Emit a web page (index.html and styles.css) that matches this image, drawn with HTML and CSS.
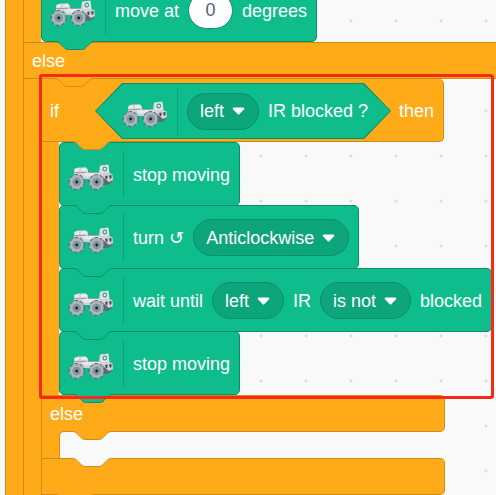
FILE: index.html
```html
<!DOCTYPE html>
<html lang="en">
<head>
<meta charset="utf-8">
<title>Block workspace</title>
<link rel="stylesheet" href="styles.css">
</head>
<body>
<svg class="defs" aria-hidden="true">
  <symbol id="tab" viewBox="0 0 40 9">
    <path class="tab-fill" d="M0 0V.5C3 .5 4 1.500 5 2.500L9 6.500C10.500 8 11.500 8.500 13.500 8.500H26.500C28.500 8.500 29.500 8 31 6.500L35 2.500C36 1.500 37 .5 40 .5V0Z"/>
    <path class="tab-line" d="M0 .5C3 .5 4 1.500 5 2.500L9 6.500C10.500 8 11.500 8.500 13.500 8.500H26.500C28.500 8.500 29.500 8 31 6.500L35 2.500C36 1.500 37 .5 40 .5"/>
  </symbol>
  <symbol id="caret" viewBox="0 0 13 8">
    <path d="M1.500 .5H11.500Q13 1 12 2.300L7.500 7Q6.500 8 5.500 7L1 2.300Q0 1 1.500 .5Z" fill="#fff"/>
  </symbol>
  <symbol id="rover" viewBox="0 0 46 27">
    <ellipse cx="38" cy="15" rx="6.500" ry="6" fill="#5d6b70"/>
    <path d="M6 8V5L10 3.500H18L20 5.500V8H31L32 1.500L40.500 .5L41.500 9L44.500 10.500L45 16L41 18L35 13L30 15H16L10 11H6Z" fill="#d0d3d5"/>
    <path d="M7 5L11 4V7L7 8ZM13 4.500L17 3.500L19 5.500V7H13Z" fill="#ebebec"/>
    <path d="M6 8.500H18M20 8.500H31" stroke="#87979a" stroke-width=".8"/>
    <path d="M14 9H31L33 12.500H17Z" fill="#e8e7e9"/>
    <path d="M32.500 2L40 1L41 8.500L33 9Z" fill="#e4e5e7"/>
    <rect x="34.500" y="2.500" width="4.500" height="5" rx="2" fill="#4b92a0"/>
    <circle cx="36.800" cy="5" r="1.200" fill="#cfeef0"/>
    <path d="M37 12L39.500 11.500V14.500L38 15.500ZM41 11.500L43.500 11V14L42 15Z" fill="#4a4a4c"/>
    <g id="wheel">
      <circle cx="8.700" cy="18" r="7.800" fill="#a7b3ba"/>
      <circle cx="8.700" cy="18" r="7.500" fill="none" stroke="#4b5a5f" stroke-width="1" stroke-dasharray="3.500 2"/>
      <circle cx="8.700" cy="18" r="5" fill="#8c9ca6" stroke="#b4c0c7" stroke-width="1"/>
      <path d="M8.700 14V22M4.700 18H12.700M6 15.300L11.400 20.700M11.400 15.300L6 20.700" stroke="#71828d" stroke-width=".6"/>
      <circle cx="8.700" cy="18" r="1.400" fill="#1c2427"/>
    </g>
    <use href="#wheel" x="20"/>
  </symbol>
</svg>

<main class="workspace">
  <div class="arm">
    <section class="c-block c-wide">
      <div class="mouth">
        <div class="block first">
          <svg class="rover"><use href="#rover"/></svg><span class="rule"></span>
          <label for="deg">move at</label>
          <input class="number" id="deg" type="text" value="0">
          <span>degrees</span>
          <svg class="tab"><use href="#tab"/></svg>
        </div>
      </div>
      <div class="bar">else<svg class="tab"><use href="#tab"/></svg></div>
      <div class="mouth">
        <section class="c-block">
          <div class="marked">
            <div class="bar head">
              <span>if</span>
              <div class="hexagon">
                <svg class="rover"><use href="#rover"/></svg><span class="rule"></span>
                <div class="dropdown"><select id="side1" aria-label="side"><option>left</option></select><svg class="caret"><use href="#caret"/></svg></div>
                <label for="side1">IR blocked ?</label>
              </div>
              <span>then</span>
              <svg class="tab"><use href="#tab"/></svg>
            </div>
            <div class="mouth">
              <div class="block">
                <svg class="rover"><use href="#rover"/></svg><span class="rule"></span>
                <span>stop moving</span>
                <svg class="tab"><use href="#tab"/></svg>
              </div>
              <div class="block">
                <svg class="rover"><use href="#rover"/></svg><span class="rule"></span>
                <label for="dir">turn <span class="turn">↺</span></label>
                <div class="dropdown"><select id="dir"><option>Anticlockwise</option></select><svg class="caret"><use href="#caret"/></svg></div>
                <svg class="tab"><use href="#tab"/></svg>
              </div>
              <div class="block">
                <svg class="rover"><use href="#rover"/></svg><span class="rule"></span>
                <label for="side2">wait until</label>
                <div class="dropdown"><select id="side2"><option>left</option></select><svg class="caret"><use href="#caret"/></svg></div>
                <label for="state">IR</label>
                <div class="dropdown"><select id="state"><option>is not</option></select><svg class="caret"><use href="#caret"/></svg></div>
                <span>blocked</span>
                <svg class="tab"><use href="#tab"/></svg>
              </div>
              <div class="block">
                <svg class="rover"><use href="#rover"/></svg><span class="rule"></span>
                <span>stop moving</span>
                <svg class="tab"><use href="#tab"/></svg>
              </div>
            </div>
          </div>
          <div class="bar">else<svg class="tab"><use href="#tab"/></svg></div>
          <div class="mouth empty"><svg class="tab"><use href="#tab"/></svg></div>
          <div class="bar foot"><svg class="tab"><use href="#tab"/></svg></div>
        </section>
      </div>
      <div class="bar"></div>
    </section>
  </div>
</main>
</body>
</html>
```

FILE: styles.css
```css
:root {
  --paper: #f9f9f9;
  --orange: #ffab19;
  --orange-line: #cf8b17;
  --teal: #0fbd8c;
  --teal-line: #0b8e69;
  --teal-dark: #0da57a;
}
* { box-sizing: border-box; }
body {
  margin: 0;
  color: #fff;
  font: 18px/20px "Liberation Sans", Arial, sans-serif;
}
.defs { position: absolute; width: 0; height: 0; }
.workspace {
  height: 100vh;
  overflow: hidden;
  padding-left: 5px;
  background: radial-gradient(circle at 22px 22px, #ddd 1px, transparent 2px) 14px 44px / 45px 45px var(--paper);
}
.arm {
  padding-left: 17px;
  border-left: 1px solid var(--orange-line);
  background: linear-gradient(var(--orange), var(--orange)) left / 17px 100% no-repeat;
}
.c-block {
  --fill: var(--orange);
  --line: var(--orange-line);
  border-left: 1px solid var(--orange-line);
  background: linear-gradient(var(--orange), var(--orange)) left / 17px 100% no-repeat;
}
.mouth { padding-left: 17px; }
.bar {
  position: relative;
  height: 37px;
  padding: 8px;
  border: 1px solid var(--orange-line);
  border-left: 0;
  background: var(--orange);
}
.c-wide > .bar { border-right: 0; }
.mouth .bar {
  width: 403px;
  border-radius: 0 5px 5px 0;
}
.mouth .head {
  display: flex;
  align-items: center;
  width: fit-content;
  height: 63px;
  padding: 2px 9px 0 8px;
  border-top: 0;
}
.tab {
  position: absolute;
  z-index: 2;
  left: 30px;
  bottom: -9px;
  width: 40px;
  height: 9px;
}
.tab-fill { fill: var(--fill); }
.tab-line { fill: none; stroke: var(--line); }
.block {
  --fill: var(--teal);
  --line: var(--teal-line);
  position: relative;
  display: flex;
  align-items: center;
  gap: 9px;
  width: fit-content;
  height: 64px;
  margin-bottom: -1px;
  padding: 1px 9px 0 8px;
  border: 1px solid var(--teal-line);
  border-radius: 5px;
  background: var(--teal);
  white-space: nowrap;
}
.block:last-child { margin-bottom: 0; }
.block .tab,
.foot .tab { left: 13px; }
.first { margin-top: -22px; }
.rover {
  flex: none;
  width: 46px;
  height: 27px;
  margin-top: 6px;
}
.rule {
  width: 1px;
  height: 47px;
  background: var(--teal-line);
  opacity: .6;
}
.hexagon {
  position: relative;
  z-index: 0;
  display: flex;
  align-items: center;
  gap: 9px;
  height: 56px;
  margin: 0 8px 0 36px;
  padding: 0 23px 0 27px;
  background: var(--teal-line);
  clip-path: polygon(0 50%, 27px 0, calc(100% - 27px) 0, 100% 50%, calc(100% - 27px) 100%, 27px 100%);
}
.hexagon::before {
  content: "";
  position: absolute;
  z-index: -1;
  inset: 1px;
  background: var(--teal);
  clip-path: polygon(0 50%, 27px 0, calc(100% - 27px) 0, 100% 50%, calc(100% - 27px) 100%, 27px 100%);
}
.dropdown { display: grid; align-items: center; }
.dropdown > * { grid-area: 1 / 1; }
select {
  appearance: none;
  height: 37px;
  padding: 0 33px 0 12px;
  border: 1px solid var(--teal-line);
  border-radius: 19px;
  background: var(--teal-dark);
  color: inherit;
  font: inherit;
}
.caret {
  justify-self: end;
  width: 13px;
  height: 8px;
  margin-right: 14px;
  pointer-events: none;
}
.number {
  width: 45px;
  height: 37px;
  padding: 0;
  border: 1px solid var(--teal-line);
  border-radius: 19px;
  background: #fff;
  color: #575e75;
  font: inherit;
  text-align: center;
}
.turn { font-family: "DejaVu Sans", sans-serif; }
.marked { position: relative; }
.marked::after {
  content: "";
  position: absolute;
  z-index: 3;
  inset: -5px 2px -4px -3px;
  border: 3px solid #f72a17;
  border-radius: 3px;
  pointer-events: none;
}
.empty {
  --fill: var(--paper);
  position: relative;
  height: 27px;
  background: linear-gradient(var(--orange), var(--orange)) left / 24px 100% no-repeat;
}
.empty::before {
  content: "";
  display: block;
  width: 370px;
  height: 29px;
  margin: -1px 0;
  border: 1px solid var(--orange-line);
  border-right: 0;
  border-radius: 5px 0 0 5px;
  background: var(--paper);
}
```
